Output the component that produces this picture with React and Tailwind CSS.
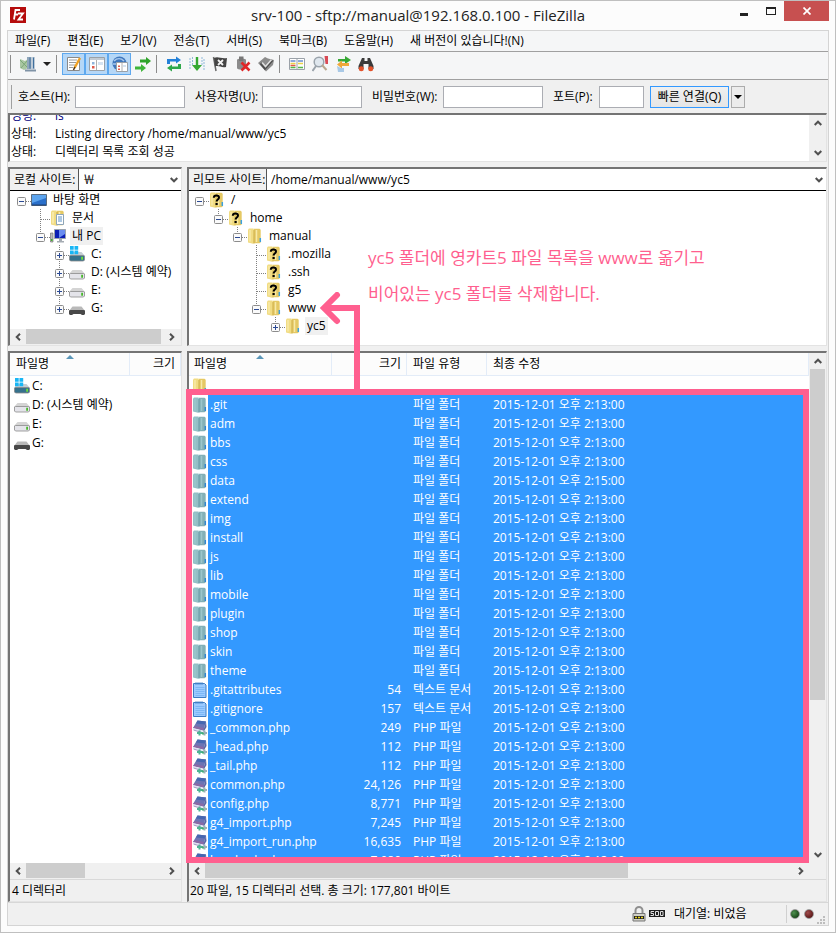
import React from 'react';
import clsx from 'clsx';

const MENU = ['파일(F)', '편집(E)', '보기(V)', '전송(T)', '서버(S)', '북마크(B)', '도움말(H)', '새 버전이 있습니다!(N)'];

const FOLDERS = ['.git', 'adm', 'bbs', 'css', 'data', 'extend', 'img', 'install', 'js', 'lib', 'mobile', 'plugin', 'shop', 'skin', 'theme'];

const FILES = [
  ...FOLDERS.map((name) => ({
    name,
    icon: 'folder',
    size: '',
    type: '파일 폴더',
    date: name === 'data' ? '2015-12-01 오후 2:15:00' : '2015-12-01 오후 2:13:00',
  })),
  { name: '.gitattributes', icon: 'text', size: '54', type: '텍스트 문서' },
  { name: '.gitignore', icon: 'text', size: '157', type: '텍스트 문서' },
  { name: '_common.php', icon: 'php', size: '249', type: 'PHP 파일' },
  { name: '_head.php', icon: 'php', size: '112', type: 'PHP 파일' },
  { name: '_tail.php', icon: 'php', size: '112', type: 'PHP 파일' },
  { name: 'common.php', icon: 'php', size: '24,126', type: 'PHP 파일' },
  { name: 'config.php', icon: 'php', size: '8,771', type: 'PHP 파일' },
  { name: 'g4_import.php', icon: 'php', size: '7,245', type: 'PHP 파일' },
  { name: 'g4_import_run.php', icon: 'php', size: '16,635', type: 'PHP 파일' },
  { name: 'head.sub.php', icon: 'php', size: '7,080', type: 'PHP 파일' },
];

const DRIVES = [
  { name: 'C:', icon: 'system' },
  { name: 'D: (시스템 예약)', icon: 'drive' },
  { name: 'E:', icon: 'drive' },
  { name: 'G:', icon: 'removable' },
];

// guides: one letter per 19px column
// r = root box, m/p = minus/plus box, M/P = same with the line going on below, t = tee, i = line, . = empty
const LOCAL_TREE = [
  { label: '바탕 화면', icon: 'desktop', guides: 'r' },
  { label: '문서', icon: 'docs', guides: '.t' },
  { label: '내 PC', icon: 'pc', guides: '.m', active: true },
  { label: 'C:', icon: 'system', guides: '..P' },
  { label: 'D: (시스템 예약)', icon: 'drive', guides: '..P' },
  { label: 'E:', icon: 'drive', guides: '..P' },
  { label: 'G:', icon: 'removable', guides: '..p' },
];

const REMOTE_TREE = [
  { label: '/', icon: 'unknown', guides: 'r' },
  { label: 'home', icon: 'unknown', guides: '.m' },
  { label: 'manual', icon: 'yellow', guides: '..m' },
  { label: '.mozilla', icon: 'unknown', guides: '...t' },
  { label: '.ssh', icon: 'unknown', guides: '...t' },
  { label: 'g5', icon: 'unknown', guides: '...t' },
  { label: 'www', icon: 'yellow', guides: '...m' },
  { label: 'yc5', icon: 'yellow', guides: '....p', active: true },
];

const Svg = ({ children, className }) => (
  <svg viewBox="0 0 16 16" className={clsx('block h-4 w-4 shrink-0', className)} fill="none" aria-hidden="true">
    {children}
  </svg>
);

const Folder = ({ left, right, edge, light, tab }) => (
  <>
    <path d="M1 1.500L2 .5h4.500L7 2v13l-1 .8L1 14.500z" fill={left} />
    <path d="M7 .8h5.500l1.200 1v12.700l-1.200.8H6.500z" fill={right} />
    <path d="M3 2v11.500M9.500 2v12" stroke={light} strokeWidth="1.500" />
    <path d="M7 2v13.500" stroke={edge} />
    <path d="M13.300 10v4" stroke={tab} strokeWidth="1.500" />
  </>
);

const Drive = ({ top, front, led }) => (
  <>
    <path d="M3.500 6h9L16 10H0z" fill={top} />
    <path d="M.5 10l1-.5h13l1 .5v4l-1 1h-13l-1-1z" fill={front} stroke="#8a8a8a" strokeWidth=".8" />
    <path d="M12.200 12.300h1.800" stroke={led} strokeWidth="3" />
  </>
);

const FileIcon = ({ name }) => {
  switch (name) {
    case 'folder':
      return <Svg><Folder left="#93bfc6" right="#83b0b6" edge="#6a9ca8" light="#9cc6cc" tab="#3186cf" /></Svg>;
    case 'yellow':
      return <Svg><Folder left="#f1dc83" right="#e5c964" edge="#cfb04c" light="#f7e9a8" tab="#3ba0dd" /></Svg>;
    case 'unknown':
      return (
        <Svg>
          <Folder left="#f1dc83" right="#e5c964" edge="#d9bf5e" light="#f7e9a8" tab="#3ba0dd" />
          <path d="M4.800 5.800C4.800 4 6 3.400 7.400 3.400s2.600.8 2.600 2.200c0 2-2.400 1.900-2.400 4" stroke="#000" strokeWidth="2" />
          <path d="M6.500 11h2.200v2H6.500z" fill="#000" />
        </Svg>
      );
    case 'text':
      return (
        <Svg>
          <path d="M1.500 1.500h11l1.500 1.500v12.500H1.500z" fill="#9bcbff" stroke="#3b7cc4" />
          <path d="M3.500 5.500h9M3.500 7.500h9M3.500 9.500h9M3.500 11.500h9M3.500 13.500h9" stroke="#74b1f2" strokeWidth=".8" />
          <path d="M4 0v3M6 0v3M8 0v3M10 0v3" stroke="#4a87c8" strokeWidth=".8" />
        </Svg>
      );
    case 'php':
      return (
        <Svg>
          <path d="M5.500.5l8.500 1-2.500 9L1 8z" fill="#6d74b4" />
          <path d="M5.500.5l8.500 1-.8 3-9.200-1z" fill="#4767b0" />
          <path d="M3 6l9 2-.5 2.500L1 8z" fill="#8a6aa5" />
          <path d="M1 8l9.500 2.500v2L1.500 10z" fill="#dfe1f2" />
          <path d="M1.500 10l8 2.500" stroke="#8f80b0" strokeWidth=".8" />
          <path d="M14 1.500l.5 5.500-3 5v-2z" fill="#5a68a6" />
          <path d="M7.500 10.500v5M5 13h5" stroke="#4fb393" strokeWidth="2" />
          <path d="M12.500 10.500v5M10 13h5" stroke="#9ab2b8" strokeWidth="2" />
          <path d="M10 12.500l1.500 2" stroke="#3fae72" strokeWidth="1.500" />
        </Svg>
      );
    case 'system':
      return (
        <Svg>
          <Drive top="#c4cdd3" front="#36718c" led="#6fe03a" />
          <path d="M1 0h3.700v3.700H1zM5.500 0h3.700v3.700H5.500zM1 4.500h3.700v3.700H1zM5.500 4.500h3.700v3.700H5.500z" fill="#19b6f5" />
        </Svg>
      );
    case 'drive':
      return <Svg><Drive top="#d4d4d4" front="#e4e4ea" led="#47b82a" /></Svg>;
    case 'removable':
      return (
        <Svg>
          <path d="M3.500 6.500h9L16 11H0z" fill="#b9b9b9" />
          <path d="M0 10.500l1.500-.5h13l1.500.5v3.500l-1 1h-2l-1.500-1H4.500L3 15H1l-1-1z" fill="#484848" />
        </Svg>
      );
    case 'desktop':
      return (
        <Svg>
          <path d="M.5 2.500h15v11H.5z" fill="#2a6fc9" stroke="#5b6d80" />
          <path d="M1 3h14v3L1 11z" fill="#5ca4ee" />
          <path d="M1 13h14" stroke="#1c3f6e" />
        </Svg>
      );
    case 'docs':
      return (
        <Svg>
          <Folder left="#f1dc83" right="#e5c964" edge="#c7a640" light="#f9edb4" tab="#e5c964" />
          <path d="M6.500 4.500h7v10h-7z" fill="#fff" stroke="#8ea5b8" />
          <path d="M8 7h4M8 9h4M8 11h4" stroke="#5c93c7" />
        </Svg>
      );
    case 'pc':
      return (
        <Svg>
          <path d="M.5 5h2.500v9H.5z" fill="#bbb" stroke="#777" strokeWidth=".7" />
          <path d="M1 11h1.500v2H1z" fill="#3fb52a" />
          <path d="M4.500 1.500h11v9h-11z" fill="#0b1fb4" stroke="#9aa3ad" />
          <path d="M9 2h6v4L9 10z" fill="#6a8df0" />
          <path d="M9 11h3v2h2v1.500H7V13h2z" fill="#a5acb3" />
        </Svg>
      );
    default:
      return null;
  }
};

const Guide = ({ kind }) => {
  const box = 'rmpMP'.includes(kind);
  return (
    <svg viewBox="0 0 19 18" className="block h-[18px] w-[19px] shrink-0" fill="none" aria-hidden="true">
      {kind !== '.' && (
        <g stroke="#808080" strokeDasharray="1 1">
          {kind !== 'r' && <path d="M9.500 0v10" />}
          {'tMPi'.includes(kind) && <path d="M9.500 10v8" />}
          {kind !== 'i' && <path d="M10 10.500h9" />}
        </g>
      )}
      {box && (
        <>
          <rect x="5.500" y="6.500" width="8" height="8" rx="1" fill="#fafafa" stroke="#8c8c8c" />
          <path d="M7 10.500h5" stroke="#2b4a94" />
          {'pP'.includes(kind) && <path d="M9.500 8v5" stroke="#2b4a94" />}
        </>
      )}
    </svg>
  );
};

const Tree = ({ items }) => (
  <ul className="pl-px">
    {items.map((item) => (
      <li key={item.label} className="flex h-[18px] items-center">
        {item.guides.split('').map((kind, i) => (
          <Guide key={i} kind={kind} />
        ))}
        <FileIcon name={item.icon} />
        <span className={clsx('ml-1 px-[2px] leading-[18px] whitespace-nowrap', item.active && 'bg-[#f0f0f0]')}>{item.label}</span>
      </li>
    ))}
  </ul>
);

const Chevron = ({ className }) => (
  <svg viewBox="0 0 8 6" className={clsx('block h-[6px] w-2', className)} fill="none" stroke="#505050" strokeWidth="2" aria-hidden="true">
    <path d="M.7 1L4 4.300 7.300 1" />
  </svg>
);

// corner leaves the square under a vertical scrollbar free
const HScroll = ({ thumb, corner }) => (
  <div className={clsx('flex h-4 shrink-0 items-stretch bg-[#f0f0f0]', corner && 'pr-4')}>
    <button type="button" aria-label="왼쪽" className="flex w-4 shrink-0 items-center justify-center">
      <Chevron className="rotate-90" />
    </button>
    <div className="flex-1">
      <div className={clsx('h-[15px] bg-[#cdcdcd]', thumb)} />
    </div>
    <button type="button" aria-label="오른쪽" className="flex w-[18px] shrink-0 items-center justify-center">
      <Chevron className="-rotate-90" />
    </button>
  </div>
);

const VScroll = ({ thumb }) => (
  <div className="flex w-[17px] shrink-0 flex-col bg-[#f0f0f0]">
    <button type="button" aria-label="위" className="flex h-4 shrink-0 items-center justify-center">
      <Chevron className="rotate-180" />
    </button>
    <div className="min-h-0 flex-1">{thumb && <div className={clsx('ml-px w-[15px] bg-[#cdcdcd]', thumb)} />}</div>
    <button type="button" aria-label="아래" className="flex h-4 shrink-0 items-center justify-center">
      <Chevron />
    </button>
  </div>
);

const Pane = ({ className, children }) => (
  <section className={clsx('flex flex-col border-t-2 border-r border-b border-l-2 border-t-[#747474] border-r-[#e3e3e3] border-b-[#e3e3e3] border-l-[#747474] bg-white', className)}>
    {children}
  </section>
);

const SiteBar = ({ id, label, value, labelWidth }) => (
  <div className="flex h-[22px] shrink-0 border-b border-black">
    <label htmlFor={id} className={clsx('flex shrink-0 items-center border-r border-[#555] bg-[#f0f0f0] pl-1 whitespace-nowrap', labelWidth)}>
      {label}
    </label>
    <div className="relative min-w-0 flex-1">
      <select id={id} className="h-full w-full appearance-none bg-white pl-1 outline-none">
        <option>{value}</option>
      </select>
      <Chevron className="pointer-events-none absolute top-2 right-[3px]" />
    </div>
  </div>
);

const SortMark = () => (
  <svg viewBox="0 0 8 4" className="absolute top-[2px] left-1/2 -ml-1 h-1 w-2" aria-hidden="true">
    <path d="M4 0l4 4H0z" fill="#5a96b8" />
  </svg>
);

const Th = ({ children, className, ...rest }) => (
  <th className={clsx('relative h-[23px] border-r border-b border-[#e3ecf8] bg-[#fcfcfc] font-normal whitespace-nowrap', className)} {...rest}>
    {children}
  </th>
);

const Divider = () => <span className="mr-[5px] ml-[2px] h-[18px] w-px shrink-0 bg-[#8c8c8c]" />;

const ToolButton = ({ label, active, children }) => (
  <button
    type="button"
    aria-label={label}
    className={clsx('flex h-[22px] w-[23px] shrink-0 items-center justify-center border', active ? 'border-[#5ea8ee] bg-[#b5d7f7]' : 'border-transparent')}
  >
    <Svg>{children}</Svg>
  </button>
);

const Toolbar = () => (
  <div className="flex h-7 shrink-0 items-center border-b border-[#a0a0a0] bg-[#f5f6f7] pb-[3px]">
    <Divider />
    <ToolButton label="사이트 관리자">
      <path d="M0 3l5 2 3-2v9l-4 2-4-2z" fill="#a9c7a2" />
      <path d="M0 4l7 7M1 12l6-7" stroke="#7da879" />
      <path d="M7 1h4.500v12H7z" fill="#8fa6bb" />
      <path d="M11.500 1H15v12h-3.500z" fill="#bccad7" />
      <path d="M10 1.500v11M13.500 1.500v11" stroke="#3f6f9d" />
      <path d="M5 14.500h11" stroke="#7f93a6" strokeWidth="2" />
    </ToolButton>
    <button type="button" aria-label="사이트 목록" className="flex h-[22px] w-[15px] items-center justify-center">
      <svg viewBox="0 0 8 4" className="h-1 w-2"><path d="M0 0h8L4 4z" fill="#222" /></svg>
    </button>
    <Divider />
    <ToolButton label="메시지 로그" active>
      <path d="M1.500 1.500h12v13h-12z" fill="#fff" stroke="#8a8a8a" />
      <path d="M3 4h8M3 6.500h7M3 9h6M3 11.500h4" stroke="#9a9a9a" />
      <path d="M14 2L8.500 12" stroke="#f0a020" strokeWidth="2.400" />
      <path d="M8.800 11l-1.300 3" stroke="#4a3520" strokeWidth="1.500" />
    </ToolButton>
    <ToolButton label="로컬 트리" active>
      <path d="M.5 1.500h15v13H.5z" fill="#fff" stroke="#9aa1a8" />
      <path d="M1 3h14" stroke="#c3cbd3" strokeWidth="2" />
      <path d="M7.500 4v10" stroke="#b0b0b0" />
      <path d="M3 6h2.500v2.500H3z" fill="#8fb4da" />
      <path d="M3 10h2.500v2.500H3z" fill="#e05a4a" />
      <path d="M9 6h5v3H9z" fill="#d5e3f1" />
    </ToolButton>
    <ToolButton label="원격 트리" active>
      <circle cx="7.500" cy="7.500" r="7" fill="#3f77bd" />
      <path d="M2 5c3-3 7-3 10 0M1 8h6" stroke="#a9c9ee" strokeWidth="1.500" />
      <path d="M4.500 6.500h11v9h-11z" fill="#fff" stroke="#9aa1a8" />
      <path d="M6 9.500h2v1.500H6zM6 12.500h2V14H6z" fill="#e05a4a" />
      <path d="M10 7v8" stroke="#b0b0b0" />
      <path d="M11 9h3v2h-3z" fill="#d5e3f1" />
    </ToolButton>
    <ToolButton label="대기열">
      <path d="M5 3.500h6V1l5 4-5 4V6.500H5z" fill="#2fa32b" />
      <path d="M0 10.500h6V8l5 4-5 4v-2.500H0z" fill="#3fb53a" />
    </ToolButton>
    <Divider />
    <ToolButton label="새로 고침">
      <path d="M1 8V3h9V.5L15 4l-5 3.500V5.500H4V8z" fill="#2380d8" />
      <path d="M15 8v5H6v2.500L1 12l5-3.500v2h6V8z" fill="#2fa84a" />
    </ToolButton>
    <ToolButton label="대기열 처리">
      <path d="M1 2v12M3.500 1v9M13 1v9M15 3v11" stroke="#8fb9d9" strokeDasharray="2 1" />
      <path d="M6.800 1h2.400v8H13l-5 6-5-6h3.800z" fill="#35a832" />
    </ToolButton>
    <ToolButton label="작업 취소">
      <path d="M1.500 1l2.500 14" stroke="#666" strokeWidth="1.500" />
      <path d="M2 2c4-2 7 1 13 0l-1 9c-5 1-7-2-11-.5z" fill="#444" />
      <path d="M6 4l5 5M11 4L6 9" stroke="#f3f3f3" strokeWidth="1.800" />
    </ToolButton>
    <ToolButton label="연결 끊기">
      <path d="M2 4c0-2 9-2 9 0v8c0 2-9 2-9 0z" fill="#8b8b8b" />
      <path d="M4 .5h4.500V5H4z" fill="#777" />
      <path d="M6.500 6.500l8 8M14.500 6.500l-8 8" stroke="#e02626" strokeWidth="2.500" />
    </ToolButton>
    <ToolButton label="다시 연결">
      <path d="M0 7l7-6 3 1.500L16 4l-1 5-7 6.500z" fill="#8c8c8c" />
      <path d="M3 7l4 5 7-8" stroke="#4c4c4c" strokeWidth="3" />
      <path d="M4 6.500l3.500 4 6-7" stroke="#dedede" strokeWidth="1.800" />
    </ToolButton>
    <Divider />
    <ToolButton label="디렉터리 비교">
      <path d="M.5 2.500h15v11H.5z" fill="#fff" stroke="#9aa1a8" />
      <path d="M1.500 5h5M9 5h5" stroke="#6a8fd0" strokeWidth="1.500" />
      <path d="M1.500 7.500h5M9 7.500h5" stroke="#e9d34a" strokeWidth="1.500" />
      <path d="M1.500 9.500h5" stroke="#e05a4a" strokeWidth="1.500" />
      <path d="M1.500 11.500h5M9 11.500h5" stroke="#55b84a" strokeWidth="1.500" />
      <path d="M8 2v12" stroke="#9aa1a8" />
    </ToolButton>
    <ToolButton label="필터">
      <circle cx="7" cy="6" r="4.800" fill="#dfe7ee" stroke="#9aa3ab" strokeWidth="1.500" />
      <path d="M10 9l4.500 5" stroke="#b9a68d" strokeWidth="2" />
      <path d="M4 10l-3.500 5" stroke="#9aa3ab" strokeWidth="2" />
      <path d="M12.500 0H16v8h-2.500z" fill="#d84a55" />
    </ToolButton>
    <ToolButton label="동기화 탐색">
      <path d="M3 3h7V0l6 4-6 4V5.500H3z" fill="#37a834" />
      <path d="M14 7H7V4.500L2 8.500l5 4V10h7z" fill="#f0a83a" />
      <path d="M2 10l4 2h3v4H3z" fill="#a9c9e6" />
    </ToolButton>
    <ToolButton label="파일 검색">
      <path d="M4 2h2.500v3h3V2H12l3.500 8v3h-5V8h-5v5h-5v-3z" fill="#3a3a3a" />
      <circle cx="3.300" cy="12.800" r="2.500" fill="#e2532c" />
      <circle cx="12.700" cy="12.800" r="2.500" fill="#e2532c" />
    </ToolButton>
  </div>
);

const QuickConnect = () => (
  <form className="flex h-[33px] shrink-0 items-center bg-[#f0f0f0] pl-[3px]" onSubmit={(e) => e.preventDefault()}>
    <span className="mr-[6px] h-6 w-px bg-[#a0a0a0]" />
    <label htmlFor="host" className="w-[57px] whitespace-nowrap">호스트(H):</label>
    <input id="host" className="mr-[10px] h-[22px] w-[110px] border border-[#abadb3] bg-white px-1" />
    <label htmlFor="user" className="w-[67px] whitespace-nowrap">사용자명(U):</label>
    <input id="user" className="mr-[10px] h-[22px] w-[100px] border border-[#abadb3] bg-white px-1" />
    <label htmlFor="pass" className="w-[71px] whitespace-nowrap">비밀번호(W):</label>
    <input id="pass" type="password" className="mr-[10px] h-[22px] w-[100px] border border-[#abadb3] bg-white px-1" />
    <label htmlFor="port" className="w-[46px] whitespace-nowrap">포트(P):</label>
    <input id="port" className="mr-[6px] h-[22px] w-[45px] border border-[#abadb3] bg-white px-1" />
    <button type="submit" className="mr-[2px] h-[22px] w-[79px] border border-[#3399ff] bg-linear-to-b from-[#f0f0f0] to-[#e5e5e5] whitespace-nowrap">
      빠른 연결(Q)
    </button>
    <button type="button" aria-label="최근 연결" className="flex h-[22px] w-[14px] items-center justify-center border border-[#acacac] bg-[#ececec]">
      <svg viewBox="0 0 8 4" className="h-1 w-2"><path d="M0 0h8L4 4z" fill="#000" /></svg>
    </button>
  </form>
);

const TitleBar = () => (
  <header className="flex h-[29px] shrink-0 items-start pl-[3px]">
    <svg viewBox="0 0 16 16" className="mt-[6px] h-4 w-4" aria-hidden="true">
      <path d="M0 0h16v16H0z" fill="#b50c0c" />
      <path d="M4 12.500L5.500 3H10M4.800 7.500H8M8 6.500h5L8.500 12.500H13" stroke="#fff" strokeWidth="1.800" fill="none" />
    </svg>
    <h1 className="min-w-0 flex-1 pl-20 text-center text-[15px] leading-[29px] whitespace-nowrap text-[#222]">
      srv-100 - sftp://manual@192.168.0.100 - FileZilla
    </h1>
    <button type="button" aria-label="최소화" className="flex h-5 w-7 items-center justify-center">
      <span className="mt-[6px] h-[3px] w-2 bg-[#222]" />
    </button>
    <button type="button" aria-label="최대화" className="flex h-5 w-[26px] items-center justify-center">
      <span className="h-2 w-[10px] border border-t-2 border-[#222]" />
    </button>
    <button type="button" aria-label="닫기" className="flex h-5 w-[45px] items-center justify-center bg-[#c75050]">
      <svg viewBox="0 0 8 8" className="h-2 w-2" stroke="#fff" strokeWidth="1.700"><path d="M.5.5l7 7M7.500.5l-7 7" /></svg>
    </button>
  </header>
);

const LocalList = () => (
  <Pane className="w-[174px] shrink-0">
    <div className="min-h-0 flex-1 overflow-hidden">
      <table className="w-full table-fixed border-separate border-spacing-0">
        <colgroup>
          <col className="w-[120px]" />
          <col />
        </colgroup>
        <thead>
          <tr>
            <Th className="pl-[6px] text-left">파일명<SortMark /></Th>
            <Th className="pr-[5px] text-right">크기</Th>
          </tr>
        </thead>
        <tbody>
          {DRIVES.map((drive) => (
            <tr key={drive.name}>
              <td colSpan={2} className="h-[19px] p-0 pl-1">
                <span className="flex items-center gap-[2px] whitespace-nowrap leading-[19px]">
                  <FileIcon name={drive.icon} />
                  {drive.name}
                </span>
              </td>
            </tr>
          ))}
        </tbody>
      </table>
    </div>
    <HScroll thumb="w-[59px]" />
    <p className="h-[22px] shrink-0 border-t border-[#d9d9d9] bg-[#f0f0f0] pl-[2px] leading-[21px]">4 디렉터리</p>
  </Pane>
);

const RemoteList = () => (
  <Pane className="relative min-w-0 flex-1">
    <div className="flex min-h-0 flex-1">
      <div className="min-w-0 flex-1 overflow-hidden">
        <table className="w-full table-fixed border-separate border-spacing-0">
          <colgroup>
            <col className="w-[19px]" />
            <col className="w-[124px]" />
            <col className="w-[75px]" />
            <col className="w-[80px]" />
            <col />
          </colgroup>
          <thead>
            <tr>
              <Th colSpan={2} className="pl-[5px] text-left">파일명<SortMark /></Th>
              <Th className="pr-[5px] text-right">크기</Th>
              <Th className="pl-[6px] text-left">파일 유형</Th>
              <Th className="pl-[6px] text-left">최종 수정</Th>
            </tr>
          </thead>
          <tbody>
            <tr>
              <td colSpan={5} className="h-[19px] p-0 pl-[3px]">
                <FileIcon name="yellow" />
              </td>
            </tr>
            {FILES.map((file) => (
              <tr key={file.name} className="leading-[19px] whitespace-nowrap text-white">
                <td className="h-[19px] p-0 pl-[3px]"><FileIcon name={file.icon} /></td>
                <td className="bg-[#3399ff] p-0 pl-[2px]">{file.name}</td>
                <td className="bg-[#3399ff] p-0 pr-[6px] text-right">{file.size}</td>
                <td className="bg-[#3399ff] p-0 pl-[6px]">{file.type}</td>
                <td className="bg-[#3399ff] p-0 pl-[6px]">{file.date ?? '2015-12-01 오후 2:13:00'}</td>
              </tr>
            ))}
          </tbody>
        </table>
      </div>
      <VScroll thumb="h-[331px]" />
    </div>
    <HScroll thumb="w-[423px]" corner />
    <p className="h-[22px] shrink-0 border-t border-[#d9d9d9] bg-[#f0f0f0] pl-px leading-[21px]">
      20 파일, 15 디렉터리 선택. 총 크기: 177,801 바이트
    </p>
    {/* highlight box round the selected rows */}
    <div className="pointer-events-none absolute top-9 right-[17px] bottom-[38px] -left-[3px] border-[6px] border-[#ff5f8f]" />
  </Pane>
);

const StatusBar = () => (
  <footer className="flex h-[23px] shrink-0 items-center justify-end border-t border-[#d7d7d7] bg-[#f0f0f0] pr-[2px]">
    <Svg className="mr-[2px]">
      <path d="M4.500 8V4.500a3.500 3.500 0 017 0V8" stroke="#8f8f8f" strokeWidth="2" />
      <path d="M2 7.500h12V15H2z" fill="#d0d0c8" stroke="#777" />
      <path d="M3 10h10v3H3z" fill="#222" />
      <path d="M4 11.500h8" stroke="#e6d21c" strokeWidth="1.500" strokeDasharray="2 1" />
    </Svg>
    <Svg className="mr-[9px]">
      <path d="M0 4h16v7H0z" fill="#1c1c1c" />
      <path d="M5 5.500H2v2h2.500v2H1.500M9.500 5.500h-3v4h3zM11.500 9.500v-4H14v4z" stroke="#ddd" />
    </Svg>
    <span className="w-[112px] whitespace-nowrap">대기열: 비었음</span>
    <span className="mr-[3px] h-[18px] w-px bg-[#d0d0d0]" />
    <span className="mr-1 h-[10px] w-[10px] rounded-full border border-[#999] bg-radial-[at_35%_35%] from-[#4f8f4f] to-[#052f05]" />
    <span className="h-[10px] w-[10px] rounded-full border border-[#999] bg-radial-[at_35%_35%] from-[#a04c4c] to-[#450505]" />
    <svg viewBox="0 0 9 9" className="ml-[3px] h-[9px] w-[9px] self-end" fill="#bdbdbd" aria-hidden="true">
      <path d="M6 0h2v2H6zM3 3h2v2H3zM6 3h2v2H6zM0 6h2v2H0zM3 6h2v2H3zM6 6h2v2H6z" />
    </svg>
  </footer>
);

export default function App() {
  return (
    <div className="flex h-screen flex-col overflow-hidden border border-[#bfbfbf] bg-[#fcfcfc] px-[6px] pb-[6px] font-['Open_Sans','Noto_Sans_CJK_KR',sans-serif] text-[12px] text-black">
      <TitleBar />
      <div className="flex min-h-0 flex-1 flex-col border border-[#d4d4d4] bg-[#f0f0f0]">
        <nav className="flex h-[21px] shrink-0 items-center gap-[17px] border-b border-[#a0a0a0] bg-[#f5f6f7] pl-[7px]">
          {MENU.map((item) => (
            <button key={item} type="button" className="leading-5 whitespace-nowrap">{item}</button>
          ))}
        </nav>
        <Toolbar />
        <QuickConnect />
        <main className="flex min-h-0 flex-1 flex-col gap-[5px] pr-px">
          <Pane className="h-[49px] shrink-0">
            <div className="flex min-h-0 flex-1">
              <div className="flex flex-1 flex-col justify-end overflow-hidden leading-[18px]">
                <p className="flex shrink-0 pl-px text-[#000080]"><span className="w-11">명령:</span>ls</p>
                <p className="flex shrink-0 pl-px"><span className="w-11">상태:</span>Listing directory /home/manual/www/yc5</p>
                <p className="flex shrink-0 pl-px"><span className="w-11">상태:</span>디렉터리 목록 조회 성공</p>
              </div>
              <VScroll />
            </div>
          </Pane>
          <div className="flex h-[179px] shrink-0 gap-[5px]">
            <Pane className="w-[174px] shrink-0">
              <SiteBar id="local" label="로컬 사이트:" value="￦" labelWidth="w-[69px]" />
              <div className="min-h-0 flex-1 overflow-hidden pl-px">
                <Tree items={LOCAL_TREE} />
              </div>
              <HScroll thumb="w-[135px]" />
            </Pane>
            <Pane className="relative min-w-0 flex-1">
              <SiteBar id="remote" label="리모트 사이트:" value="/home/manual/www/yc5" labelWidth="w-[78px]" />
              <div className="min-h-0 flex-1">
                <Tree items={REMOTE_TREE} />
              </div>
              <p className="absolute top-[71px] left-[179px] text-[17px] leading-9 whitespace-nowrap text-[#ff5f8f]">
                yc5 폴더에 영카트5 파일 목록을 www로 옮기고
                <br />
                비어있는 yc5 폴더를 삭제합니다.
              </p>
              <svg viewBox="0 0 42 98" className="absolute top-[123px] left-[130px] z-10 h-[98px] w-[42px]" fill="none" stroke="#ff5f8f" strokeWidth="6" aria-hidden="true">
                <path d="M6 16h32v82" />
                <path d="M18 3L5 16l13 13" strokeLinecap="round" />
              </svg>
            </Pane>
          </div>
          <div className="flex min-h-0 flex-1 gap-[5px]">
            <LocalList />
            <RemoteList />
          </div>
        </main>
        <StatusBar />
      </div>
    </div>
  );
}
